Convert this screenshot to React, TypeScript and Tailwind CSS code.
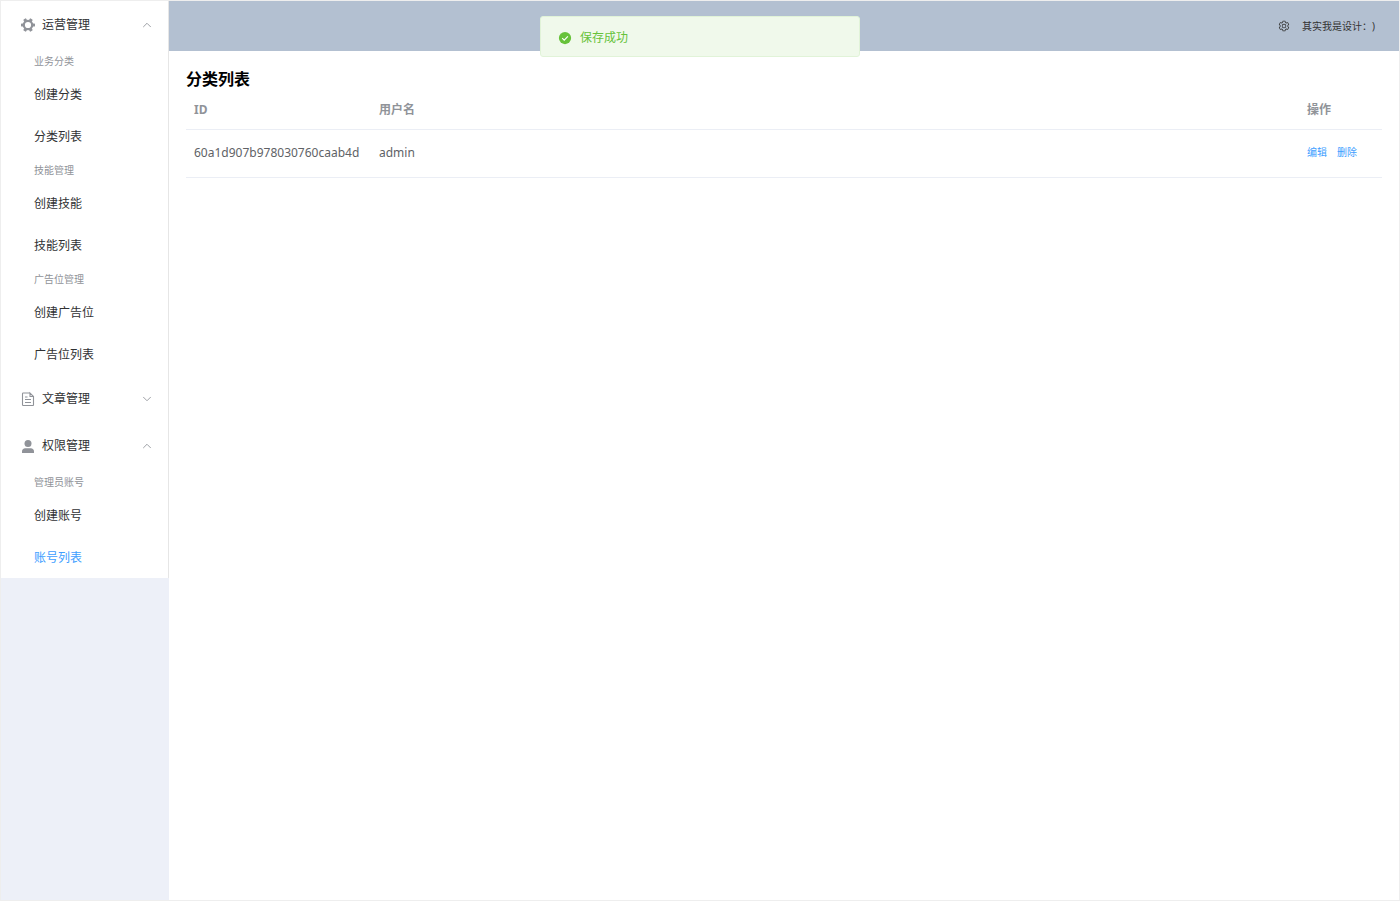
import {useState} from "react";
import {ChevronDown, ChevronUp} from "lucide-react";

type Group = {title: string; items: string[]};
type Menu = {title: string; icon: "tools" | "document" | "user"; groups: Group[]};

const menus: Menu[] = [
  {
    title: "运营管理",
    icon: "tools",
    groups: [
      {title: "业务分类", items: ["创建分类", "分类列表"]},
      {title: "技能管理", items: ["创建技能", "技能列表"]},
      {title: "广告位管理", items: ["创建广告位", "广告位列表"]},
    ],
  },
  {
    title: "文章管理",
    icon: "document",
    groups: [{title: "文章", items: ["创建文章", "文章列表"]}],
  },
  {
    title: "权限管理",
    icon: "user",
    groups: [{title: "管理员账号", items: ["创建账号", "账号列表"]}],
  },
];

const users = [{id: "60a1d907b978030760caab4d", username: "admin"}];

function MenuIcon({name}: {name: Menu["icon"]}) {
  if (name === "tools") {
    return (
      <svg viewBox="0 0 16 16" className="size-4 text-[#909399]" aria-hidden="true">
        <circle cx="8" cy="8" r="4.2" fill="none" stroke="currentColor" strokeWidth="2.2" />
        {[30, 90, 150, 210, 270, 330].map((deg) => (
          <rect
            key={deg}
            x="6.4"
            y="1"
            width="3.2"
            height="2.6"
            rx="0.7"
            fill="currentColor"
            transform={`rotate(${deg} 8 8)`}
          />
        ))}
      </svg>
    );
  }
  if (name === "document") {
    return (
      <svg
        viewBox="0 0 16 16"
        className="size-4 text-[#909399]"
        fill="none"
        stroke="currentColor"
        strokeWidth="1.1"
        aria-hidden="true">
        <path d="M10 2H3.200a.7.7 0 0 0-.7.7v11.100c0 .4.3.7.7.7h9.600a.7.7 0 0 0 .7-.7V5.500L10 2v3.500h3.500M5 6h2.500M5 8.500h6M5 11.500h6" />
      </svg>
    );
  }
  return (
    <svg viewBox="0 0 16 16" className="size-4 text-[#909399]" fill="currentColor" aria-hidden="true">
      <circle cx="8" cy="5.5" r="3.5" />
      <path d="M2 15v-1.700C2 11.500 3.400 10.200 5.200 10.200h5.600c1.800 0 3.200 1.300 3.200 3.100v1.700z" />
    </svg>
  );
}

function SettingIcon() {
  return (
    <svg viewBox="0 0 1024 1024" className="size-3" fill="currentColor" aria-hidden="true">
      <path d="M600.704 64a32 32 0 0 1 30.464 22.208l35.2 109.376c14.784 7.232 28.928 15.36 42.432 24.512l112.384-24.192a32 32 0 0 1 34.432 15.36L944.32 364.8a32 32 0 0 1-4.032 37.504l-77.12 85.12a357.12 357.12 0 0 1 0 49.024l77.12 85.248a32 32 0 0 1 4.032 37.504l-88.704 153.6a32 32 0 0 1-34.432 15.296L708.8 803.904c-13.44 9.088-27.648 17.28-42.368 24.512l-35.264 109.376A32 32 0 0 1 600.704 960H423.296a32 32 0 0 1-30.464-22.208L357.696 828.48a351.616 351.616 0 0 1-42.56-24.64l-112.32 24.256a32 32 0 0 1-34.432-15.36L79.68 659.2a32 32 0 0 1 4.032-37.504l77.12-85.248a357.12 357.12 0 0 1 0-48.896l-77.12-85.248A32 32 0 0 1 79.68 364.8l88.704-153.6a32 32 0 0 1 34.432-15.296l112.32 24.256c13.568-9.152 27.776-17.408 42.56-24.64l35.2-109.312A32 32 0 0 1 423.232 64H600.64zm-23.424 64H446.72l-36.352 113.088-24.512 11.968a294.113 294.113 0 0 0-34.816 20.096l-22.656 15.36-116.224-25.088-65.28 113.152 79.68 88.192-1.92 27.136a293.12 293.12 0 0 0 0 40.192l1.92 27.136-79.808 88.192 65.344 113.152 116.224-25.024 22.656 15.296a294.113 294.113 0 0 0 34.816 20.096l24.512 11.968L446.72 896h130.688l36.48-113.152 24.448-11.904a288.282 288.282 0 0 0 34.752-20.096l22.592-15.296 116.288 25.024 65.28-113.152-79.744-88.192 1.92-27.136a293.12 293.12 0 0 0 0-40.256l-1.92-27.136 79.808-88.128-65.344-113.152-116.288 24.96-22.592-15.232a287.616 287.616 0 0 0-34.752-20.096l-24.448-11.904L577.344 128zM512 320a192 192 0 1 1 0 384 192 192 0 0 1 0-384zm0 64a128 128 0 1 0 0 256 128 128 0 0 0 0-256z" />
    </svg>
  );
}

function Sidebar() {
  const [opened, setOpened] = useState(["运营管理", "权限管理"]);
  const [active, setActive] = useState("账号列表");

  const toggle = (title: string) => {
    setOpened(opened.includes(title) ? opened.filter((t) => t !== title) : [...opened, title]);
  };

  return (
    <aside className="w-[168px] shrink-0 bg-[#edf0f8]">
      <nav className="border-r border-[#e6e6e6] bg-white text-xs text-[#303133]">
        {menus.map((menu) => {
          const isOpen = opened.includes(menu.title);
          const Chevron = isOpen ? ChevronUp : ChevronDown;
          return (
            <div key={menu.title}>
              <button
                onClick={() => toggle(menu.title)}
                aria-expanded={isOpen}
                className="flex h-[47px] w-full cursor-pointer items-center pr-3.5 pl-[19px]">
                <MenuIcon name={menu.icon} />
                <span className="ml-1.5">{menu.title}</span>
                <Chevron className="ml-auto size-3.5 text-[#909399]" strokeWidth={1.5} />
              </button>
              {isOpen &&
                menu.groups.map((group) => (
                  <div key={group.title}>
                    <div className="h-[25px] pt-1.5 pl-[33px] text-[10px] leading-[14px] text-[#909399]">
                      {group.title}
                    </div>
                    {group.items.map((item) => (
                      <a
                        key={item}
                        href="#"
                        onClick={() => setActive(item)}
                        className={`flex h-[42px] items-center pt-0.5 pl-[33px] ${
                          item === active ? "text-[#409eff]" : ""
                        }`}>
                        {item}
                      </a>
                    ))}
                  </div>
                ))}
            </div>
          );
        })}
      </nav>
    </aside>
  );
}

function UserTable() {
  return (
    <table className="w-full text-left text-xs text-[#606266]">
      <thead>
        <tr className="h-[38px] border-b border-[#ebeef5] text-[#909399]">
          <th className="w-[185px] px-2 font-bold">ID</th>
          <th className="px-2 font-bold">用户名</th>
          <th className="w-[83px] px-2 font-bold">操作</th>
        </tr>
      </thead>
      <tbody>
        {users.map((user) => (
          <tr key={user.id} className="h-12 border-b border-[#ebeef5]">
            <td className="px-2">{user.id}</td>
            <td className="px-2">{user.username}</td>
            <td className="px-2">
              <div className="flex gap-2.5 text-[10px] text-[#409eff]">
                <button className="cursor-pointer">编辑</button>
                <button className="cursor-pointer">删除</button>
              </div>
            </td>
          </tr>
        ))}
      </tbody>
    </table>
  );
}

export default function App() {
  return (
    <div
      lang="zh-CN"
      className="flex min-h-screen border border-[#eee] bg-white font-['Noto_Sans','Noto_Sans_CJK_SC',sans-serif]">
      <Sidebar />
      <div className="min-w-0 flex-1">
        <header className="flex h-[50px] items-center justify-end bg-[#b3c0d1] pr-6 text-[10px] text-[#333]">
          <button aria-label="设置" className="mr-3 cursor-pointer">
            <SettingIcon />
          </button>
          <span className="[text-spacing-trim:space-all]">其实我是设计：)</span>
        </header>
        <main className="px-[17px] pt-4">
          <h1 className="text-base font-bold text-black">分类列表</h1>
          <UserTable />
        </main>
      </div>

      {/* Success message */}
      <div
        role="alert"
        className="fixed top-4 left-1/2 flex h-[41px] w-80 -translate-x-1/2 items-center rounded-[3px] border border-[#e1f3d8] bg-[#f0f9eb] px-[17px] pt-0.5 text-xs text-[#67c23a]">
        <svg viewBox="0 0 16 16" className="mr-2 size-3.5" aria-hidden="true">
          <circle cx="8" cy="8" r="7" fill="currentColor" />
          <path d="M4.800 8.200l2.300 2.200 4.200-4.300" fill="none" stroke="white" strokeWidth="1.300" />
        </svg>
        <p>保存成功</p>
      </div>
    </div>
  );
}
